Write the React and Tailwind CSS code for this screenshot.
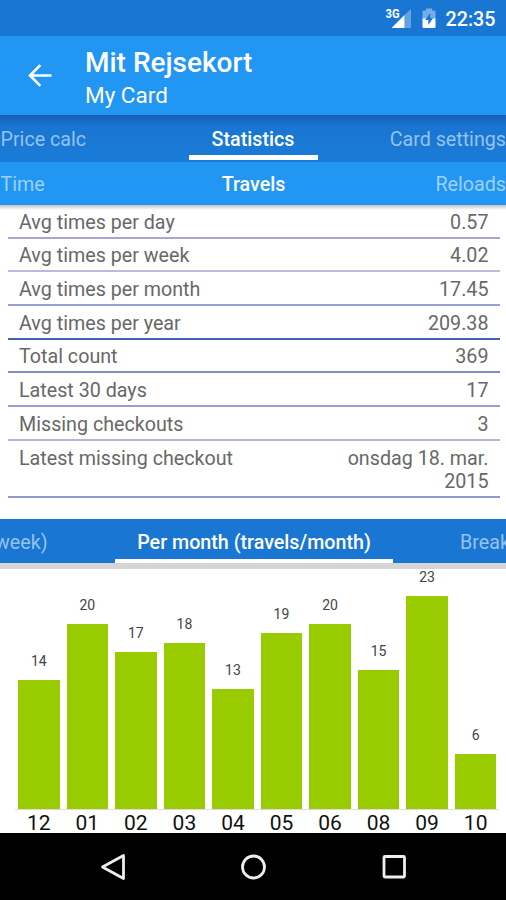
const stats = [
  { label: "Avg times per day", value: "0.57", line: "border-[#aaa4d4]" },
  { label: "Avg times per week", value: "4.02", line: "border-[#bdb8dd]" },
  { label: "Avg times per month", value: "17.45", line: "border-[#98a0d2]" },
  { label: "Avg times per year", value: "209.38", line: "border-[#4560b4]" },
  { label: "Total count", value: "369", line: "border-[#7f8ac8]" },
  { label: "Latest 30 days", value: "17", line: "border-[#9a9cd2]" },
  { label: "Missing checkouts", value: "3", line: "border-[#b9b4dc]" },
  { label: "Latest missing checkout", value: "onsdag 18. mar. 2015", line: "border-[#9297cf]" },
];

const months = [
  { month: "12", count: 14 },
  { month: "01", count: 20 },
  { month: "02", count: 17 },
  { month: "03", count: 18 },
  { month: "04", count: 13 },
  { month: "05", count: 19 },
  { month: "06", count: 20 },
  { month: "08", count: 15 },
  { month: "09", count: 23 },
  { month: "10", count: 6 },
];

const PX_PER_TRAVEL = 9.24;

function StatusBar() {
  return (
    <div className="flex h-9 shrink-0 items-center justify-end bg-[#1976d2] pr-[10.5px]">
      <svg className="h-6 w-[28px]" viewBox="0 0 28 24" fill="none">
        <path d="M26 3v19h-6.500V9z" fill="#64a3e2" />
        <path d="M6.500 22 19.500 9v13z" fill="#fff" />
        <text x="0.5" y="12" fill="#fff" fontSize="12.5" fontWeight="700" textLength="14" lengthAdjust="spacingAndGlyphs">3G</text>
      </svg>
      <svg className="ml-[9px] h-6 w-[14px]" viewBox="0 0 14 24">
        <path d="M4 2.5h6v2h2.2a1.3 1.3 0 0 1 1.3 1.3V13H.5V5.8a1.3 1.3 0 0 1 1.3-1.3H4z" fill="#75aee6" />
        <path d="M.5 12.5h13v8.2a1.3 1.3 0 0 1-1.3 1.3H1.8a1.3 1.3 0 0 1-1.3-1.3z" fill="#fff" />
        <path d="M8.2 7 3.3 14h3v5L11 12H8.2z" fill="#1976d2" />
      </svg>
      <span className="ml-[10px] mt-[3px] text-[19.7px] font-medium leading-6 text-white">22:35</span>
    </div>
  );
}

function Toolbar() {
  return (
    <header className="flex h-[79px] shrink-0 items-center bg-[#2196f3] text-white">
      <svg className="ml-[28px] h-6 w-6" viewBox="0 0 24 24" fill="none" stroke="#fff" strokeWidth="2.6">
        <path d="M23.5 11.5H2M12.3 1.2 2 11.5l10.3 10.3" />
      </svg>
      <div className="ml-[33px] pt-[6px]">
        <h1 className="text-[28px] font-medium leading-[33px]">Mit Rejsekort</h1>
        <p className="text-[22.5px] leading-[33px]">My Card</p>
      </div>
    </header>
  );
}

function NavBar() {
  return (
    <nav className="flex h-[67px] shrink-0 items-center justify-between bg-black pl-[98px] pr-[96px]">
      <svg className="h-8 w-8" viewBox="0 0 32 32" fill="none" stroke="#eee" strokeWidth="2.8" strokeLinejoin="round">
        <path d="M4.5 16 25.5 4.5v23z" />
      </svg>
      <svg className="h-8 w-8" viewBox="0 0 32 32" fill="none" stroke="#eee" strokeWidth="2.8">
        <circle cx="15.5" cy="16" r="11" />
      </svg>
      <svg className="h-8 w-8" viewBox="0 0 32 32" fill="none" stroke="#eee" strokeWidth="2.8">
        <rect x="6" y="5.5" width="20.5" height="20.5" rx="1" />
      </svg>
    </nav>
  );
}

function App() {
  return (
    <div className="flex h-[900px] w-[506px] flex-col overflow-hidden bg-white font-['Roboto',sans-serif]">
      <StatusBar />
      <Toolbar />

      <div className="grid h-[47px] shrink-0 grid-cols-[1fr_129px_1fr] bg-linear-to-b from-[#1560b4] via-[#1976d2] via-25% to-[#1a7cd8] text-[19.7px] leading-[49px] text-[#95c2ec]">
        <span className="pl-[0.5px]">Price calc</span>
        <div className="h-[45px] border-b-[5px] border-white text-center font-medium text-white">Statistics</div>
        <span className="text-right">Card settings</span>
      </div>

      <div className="grid h-[43px] shrink-0 grid-cols-[1fr_108px_1fr] bg-[#2196f3] text-[19.7px] leading-[45px] text-[#9dd1fa]">
        <span className="pl-[0.5px]">Time</span>
        <div className="h-full border-b-[5px] border-white pl-px text-center font-medium text-white">Travels</div>
        <span className="text-right">Reloads</span>
      </div>

      <div className="h-[314px] shrink-0">
        <div className="h-[5px] bg-linear-to-b from-[#c4c4c4] to-white" />
        <dl className="pl-[7.5px] pr-[6.5px] text-[19.7px] leading-[23px] text-[#686868]">
          {stats.map((s, i) => (
            <div
              key={s.label}
              className={`flex justify-between border-b-2 pb-[2.9px] pl-[11.5px] pr-[11px] last:pb-[3.9px] ${i === 0 ? "pt-[0.7px]" : "pt-[5.8px]"} ${s.line}`}
            >
              <dt>{s.label}</dt>
              <dd className="w-[150px] text-right">{s.value}</dd>
            </div>
          ))}
        </dl>
      </div>

      <div className="grid h-[44px] shrink-0 grid-cols-[115px_278px_113px] overflow-hidden bg-[#1976d2] text-[19.7px] leading-[48px] text-[#95c2ec]">
        <span className="-ml-[5px] whitespace-nowrap">week)</span>
        <div className="h-[44px] border-b-[4px] border-white text-center font-medium text-white">
          Per month (travels/month)
        </div>
        <span className="pl-[67px]">Break</span>
      </div>

      <div className="flex h-[270px] shrink-0 flex-col">
        <div className="h-[6px] shrink-0 bg-[#d5d5d5]" />
        <div className="ml-[15px] mr-[7px] flex h-[241px] shrink-0 items-end justify-between border-b border-[#ddd] pl-[3px] pr-[2.5px]">
          {months.map((m) => (
            <div key={m.month} className="flex w-[41.5px] flex-col items-center text-[14px] text-[#444]">
              <span className="mb-[11px] leading-4">{m.count}</span>
              <div className="w-full bg-[#99cc00]" style={{ height: m.count * PX_PER_TRAVEL }} />
            </div>
          ))}
        </div>
        <div className="ml-[18px] mr-[9.5px] flex justify-between text-[21px] leading-[27px] text-[#111]">
          {months.map((m) => (
            <span key={m.month} className="w-[41.5px] text-center">{m.month}</span>
          ))}
        </div>
      </div>

      <NavBar />
    </div>
  );
}

export default App;
